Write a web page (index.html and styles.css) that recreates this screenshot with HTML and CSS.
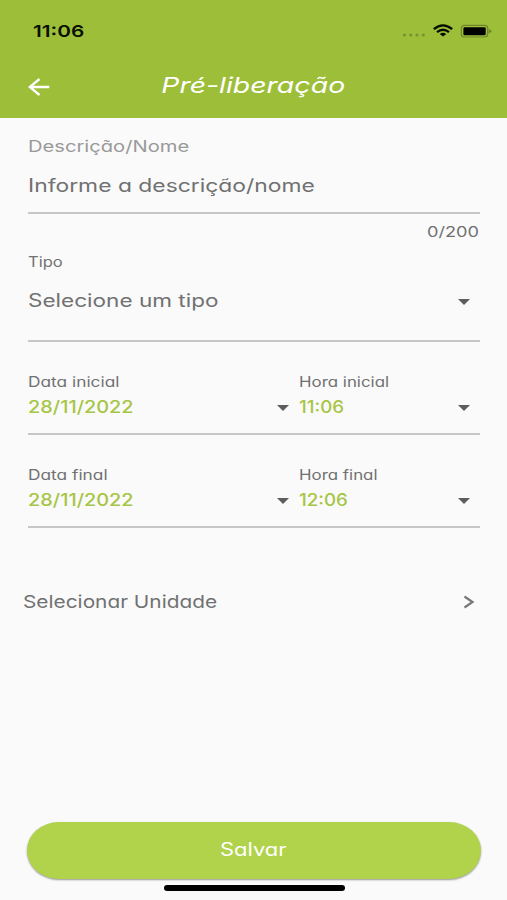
FILE: index.html
```html
<!DOCTYPE html>
<html lang="pt-BR">
<head>
<meta charset="utf-8">
<meta name="viewport" content="width=device-width">
<title>Pré-liberação</title>
<link rel="stylesheet" href="styles.css">
</head>
<body>
<header class="header">
  <div class="status">
    <span class="text clock">11:06</span>
    <svg class="status-icons" width="92" height="18" viewBox="0 0 92 18">
      <g fill="#789131"><circle cx="4.5" cy="13" r="1.6"/><circle cx="10.7" cy="13" r="1.6"/><circle cx="17" cy="13" r="1.6"/><circle cx="23.3" cy="13" r="1.6"/></g>
      <g fill="none" stroke="#080d02" stroke-width="2.3"><path d="M33.8 7.2Q43 -0.4 52.2 7.2"/><path d="M37 10.2Q43 5.4 49 10.2"/></g>
      <path d="M39.7 11.9Q43 9.6 46.3 11.9L43 14.6Z" fill="#080d02"/>
      <rect x="61.3" y="3.4" width="26.4" height="11.6" rx="3" fill="none" stroke="#6f862c" stroke-width="1.2"/>
      <rect x="63.4" y="5.2" width="22.3" height="8" rx="1.2" fill="#000"/>
      <path d="M88.7 6.6L92 9.2L88.7 11.8Z" fill="#6f862c"/>
    </svg>
  </div>
  <div class="appbar">
    <svg class="back" width="24" height="20" viewBox="0 0 24 20"><path d="M21.3 10H1.8M11.5 2L1.8 10L11.5 18" fill="none" stroke="#fff" stroke-width="2.3"/></svg>
    <h1 class="text title">Pré-liberação</h1>
  </div>
</header>
<main class="form">
  <section class="field description">
    <label class="text caption">Descrição/Nome</label>
    <div class="text value">Informe a descrição/nome</div>
  </section>
  <div class="text counter">0/200</div>
  <section class="field type">
    <label class="text label type-label">Tipo</label>
    <div class="row"><span class="text value type-value">Selecione um tipo</span><i class="arrow"></i></div>
  </section>
  <section class="field period">
    <div class="cell">
      <label class="text label date-label">Data inicial</label>
      <div class="row"><span class="text picked">28/11/2022</span><i class="arrow"></i></div>
    </div>
    <div class="cell">
      <label class="text label time-label">Hora inicial</label>
      <div class="row"><span class="text picked time">11:06</span><i class="arrow"></i></div>
    </div>
  </section>
  <section class="field period">
    <div class="cell">
      <label class="text label date-label">Data final</label>
      <div class="row"><span class="text picked">28/11/2022</span><i class="arrow"></i></div>
    </div>
    <div class="cell">
      <label class="text label time-label">Hora final</label>
      <div class="row"><span class="text picked time">12:06</span><i class="arrow"></i></div>
    </div>
  </section>
  <div class="unit">
    <span class="text value unit-value">Selecionar Unidade</span>
    <svg width="12" height="14" viewBox="0 0 12 14"><path d="M1.5 1.5L9.5 7L1.5 12.5" fill="none" stroke="#777" stroke-width="2.2"/></svg>
  </div>
</main>
<footer class="footer">
  <button class="save"><span class="text save-text">Salvar</span></button>
  <div class="home"></div>
</footer>
</body>
</html>
```
FILE: styles.css
```css
* { box-sizing: border-box; }
body {
  margin: 0;
  height: 900px;
  display: flex;
  flex-direction: column;
  background: #fafafa;
  color: #717171;
  font-family: Inter, "Liberation Sans", sans-serif;
  font-feature-settings: "cv11";
  overflow: hidden;
}
.text {
  display: block;
  width: max-content;
  white-space: nowrap;
  transform: scaleX(var(--stretch, 1.2));
  transform-origin: left;
}
.header { height: 118px; background: #9dbe39; }
.status { height: 62px; padding: 22px 15px 0 33px; display: flex; justify-content: space-between; }
.clock { --stretch: 1.26; font-size: 16.5px; font-weight: 600; line-height: 18px; color: #0a1002; }
.appbar { height: 56px; padding: 0 28px; display: grid; grid-template-columns: 24px 1fr 24px; }
.back { margin-top: 15px; }
.title { --stretch: 1.29; justify-self: center; transform-origin: center; margin: 8px 0 0; font-size: 22px; line-height: 30px; font-weight: 400; font-style: italic; color: #fff; }
.form { flex: 1; padding: 0 27px 0 28px; }
.field { border-bottom: 2px solid #c6c6c6; }
.description { height: 96px; padding-top: 18px; }
.caption { --stretch: 1.26; font-size: 16px; line-height: 20px; color: #999; }
.value { --stretch: 1.27; font-size: 18px; line-height: 24px; }
.description .value { margin-top: 18px; }
.counter { --stretch: 1.3; margin: 8px 1px 0 auto; transform-origin: right; font-size: 14px; line-height: 20px; }
.label { --stretch: 1.18; font-size: 14px; line-height: 18px; }
.date-label { --stretch: 1.235; }
.time-label { --stretch: 1.205; }
.type { height: 89px; margin-top: 11px; }
.row { display: flex; align-items: center; justify-content: space-between; padding-right: 10px; }
.type .row { margin-top: 18px; }
.type-value { --stretch: 1.253; }
.arrow { border: 6.5px solid transparent; border-top: 6px solid #5d5d5d; border-bottom: 0; margin-top: 2px; }
.period { height: 93px; padding-top: 31px; display: grid; grid-template-columns: 271px 181px; }
.picked { --stretch: 1.17; font-size: 17px; line-height: 24px; margin-top: 4px; font-weight: 500; color: #a7c545; }
.time { --stretch: 1.1; }
.cell .arrow { margin-top: 5px; }
.unit { margin: 62px 5px 0 -5px; display: flex; align-items: center; justify-content: space-between; }
.unit-value { --stretch: 1.19; font-size: 17.5px; }
.footer { height: 78px; padding: 0 26px 0 27px; }
.save { width: 100%; height: 57px; border: 0; padding: 0; border-radius: 32px / 28.5px; background: #b0d34b; box-shadow: 0 1px 2px #0006; display: flex; align-items: center; justify-content: center; font: inherit; font-feature-settings: inherit; color: #fff; }
.save-text { --stretch: 1.22; font-size: 18px; line-height: 24px; transform-origin: center; margin: 0 1px 2px 0; }
.home { width: 181px; height: 6px; margin: 6px auto 0; border-radius: 3px; background: #000; }
```
